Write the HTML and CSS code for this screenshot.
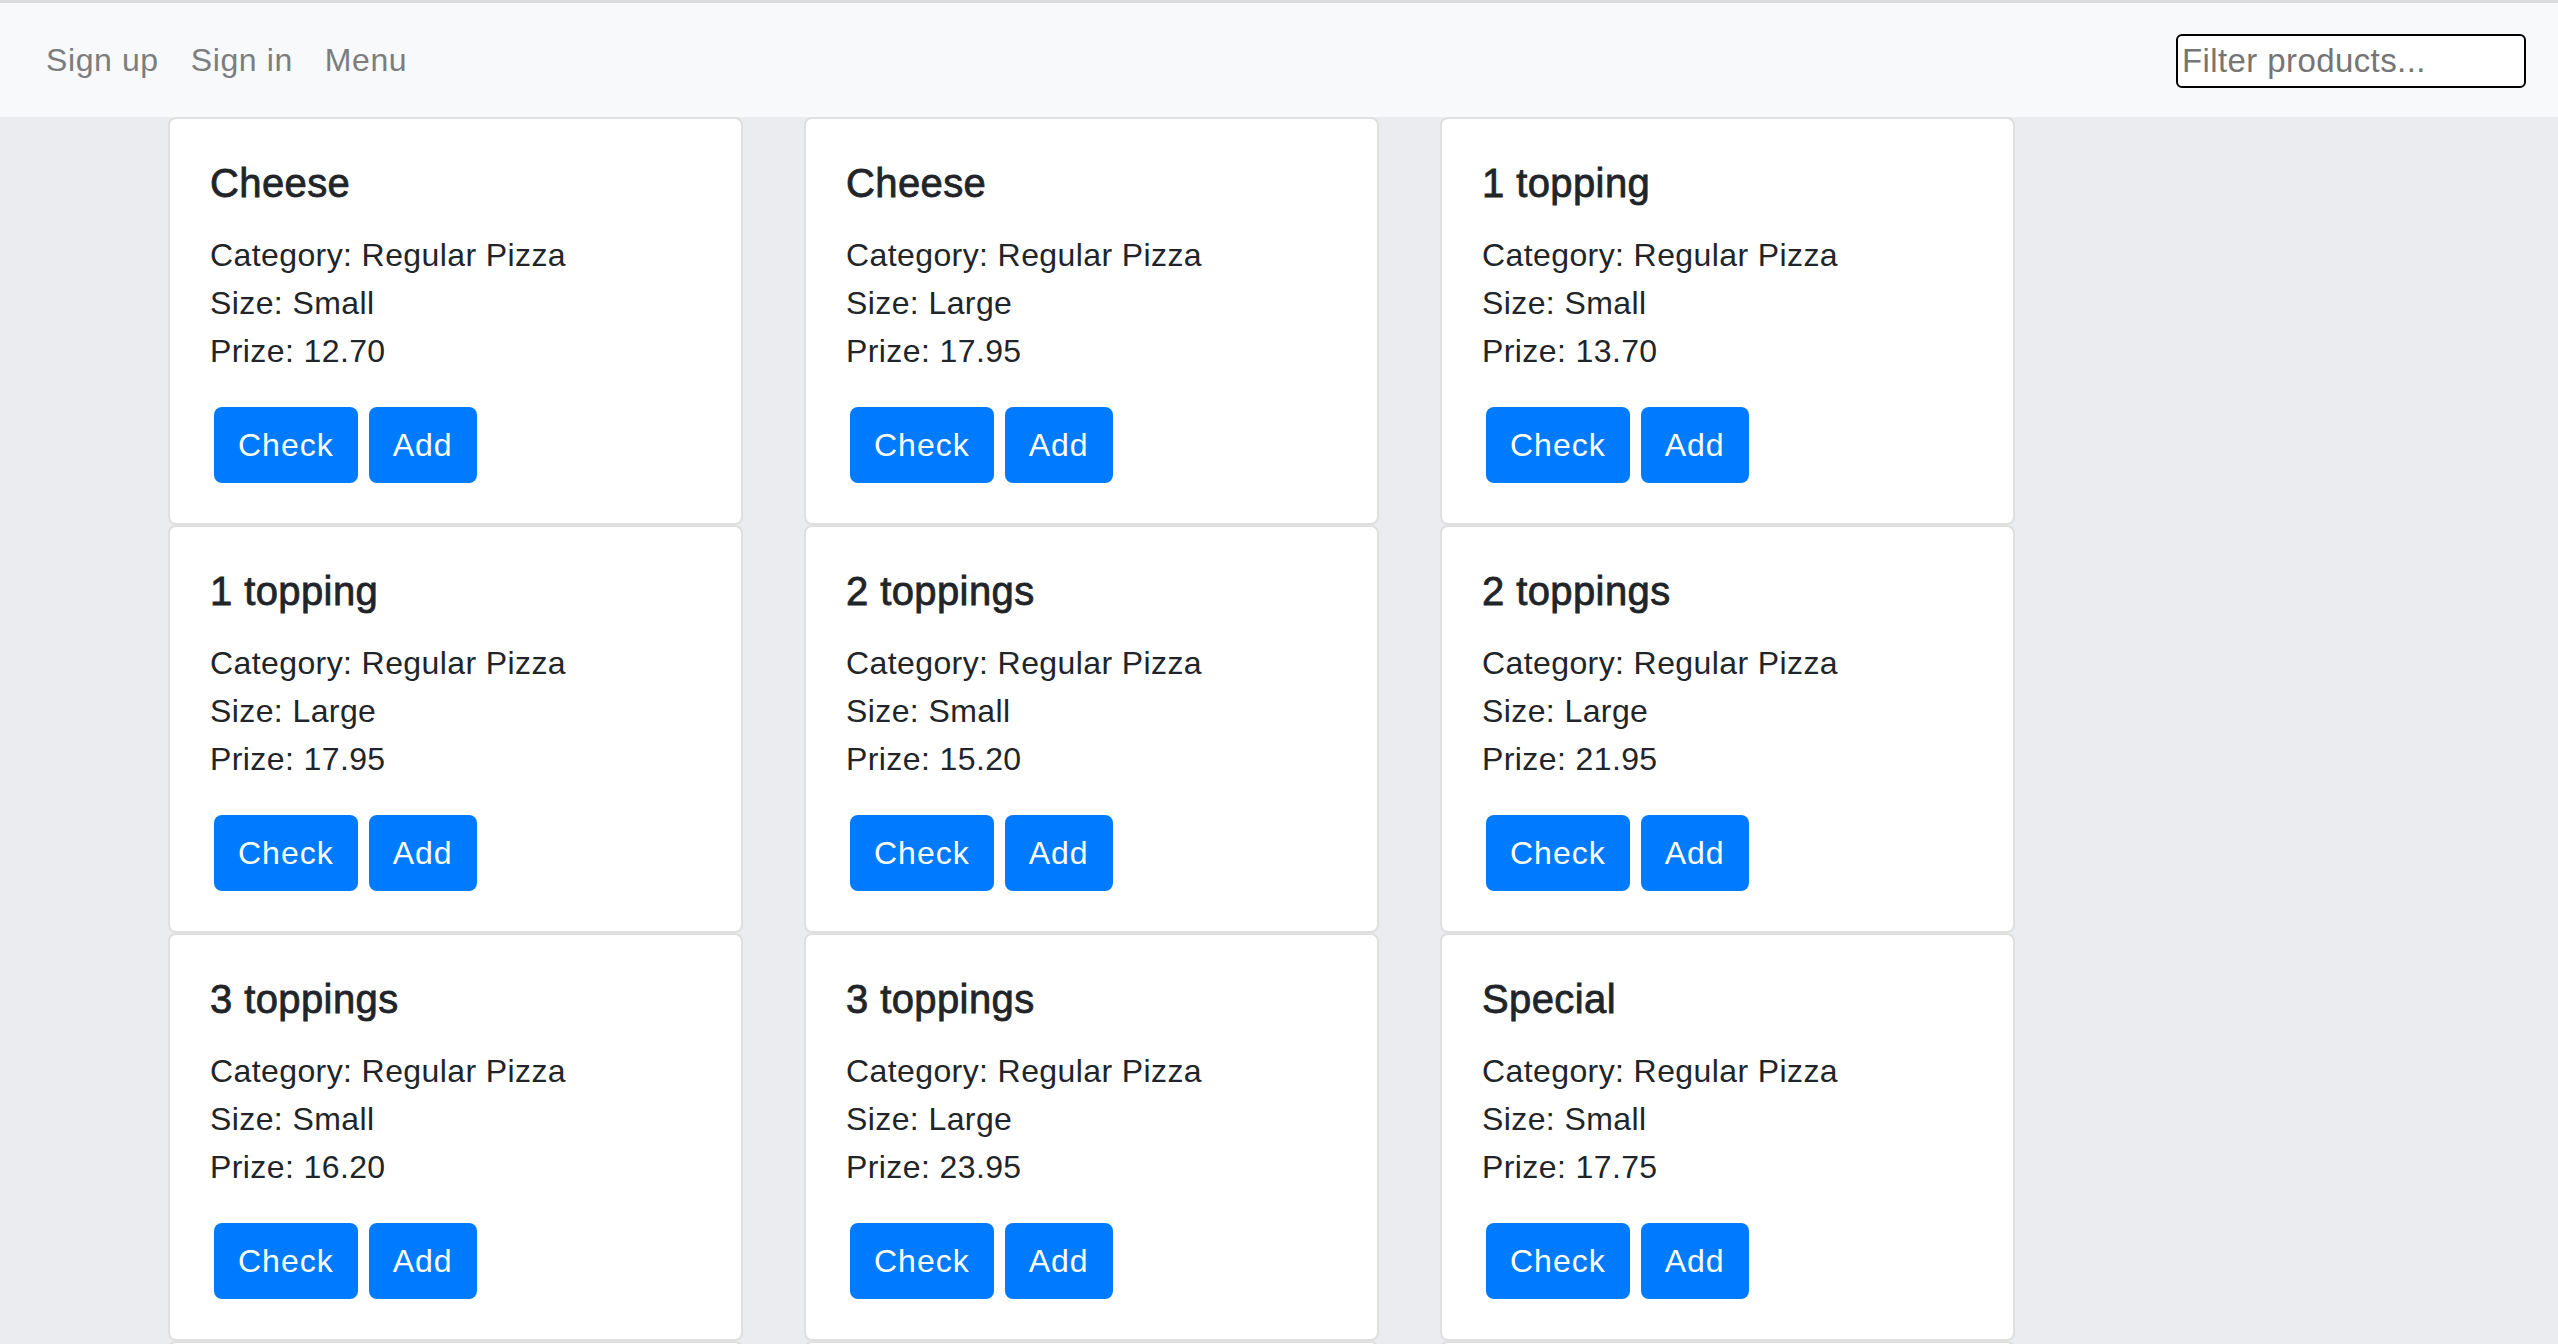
FILE: index.html
```html
<!DOCTYPE html>
<html lang="en">
<head>
<meta charset="utf-8">
<title>Products</title>
<link rel="stylesheet" href="styles.css">
</head>
<body>
<nav class="navbar">
  <ul class="nav-links">
    <li><a class="nav-link" href="#">Sign up</a></li>
    <li><a class="nav-link" href="#">Sign in</a></li>
    <li><a class="nav-link" href="#">Menu</a></li>
  </ul>
  <input class="filter" type="text" placeholder="Filter products...">
</nav>
<main class="products">
  <div class="card"><h5 class="card-title">Cheese</h5><div class="card-text"><div>Category: Regular Pizza</div><div>Size: Small</div><div>Prize: 12.70</div></div><div class="actions"><button class="btn">Check</button><button class="btn">Add</button></div></div>
  <div class="card"><h5 class="card-title">Cheese</h5><div class="card-text"><div>Category: Regular Pizza</div><div>Size: Large</div><div>Prize: 17.95</div></div><div class="actions"><button class="btn">Check</button><button class="btn">Add</button></div></div>
  <div class="card"><h5 class="card-title">1 topping</h5><div class="card-text"><div>Category: Regular Pizza</div><div>Size: Small</div><div>Prize: 13.70</div></div><div class="actions"><button class="btn">Check</button><button class="btn">Add</button></div></div>
  <div class="card"><h5 class="card-title">1 topping</h5><div class="card-text"><div>Category: Regular Pizza</div><div>Size: Large</div><div>Prize: 17.95</div></div><div class="actions"><button class="btn">Check</button><button class="btn">Add</button></div></div>
  <div class="card"><h5 class="card-title">2 toppings</h5><div class="card-text"><div>Category: Regular Pizza</div><div>Size: Small</div><div>Prize: 15.20</div></div><div class="actions"><button class="btn">Check</button><button class="btn">Add</button></div></div>
  <div class="card"><h5 class="card-title">2 toppings</h5><div class="card-text"><div>Category: Regular Pizza</div><div>Size: Large</div><div>Prize: 21.95</div></div><div class="actions"><button class="btn">Check</button><button class="btn">Add</button></div></div>
  <div class="card"><h5 class="card-title">3 toppings</h5><div class="card-text"><div>Category: Regular Pizza</div><div>Size: Small</div><div>Prize: 16.20</div></div><div class="actions"><button class="btn">Check</button><button class="btn">Add</button></div></div>
  <div class="card"><h5 class="card-title">3 toppings</h5><div class="card-text"><div>Category: Regular Pizza</div><div>Size: Large</div><div>Prize: 23.95</div></div><div class="actions"><button class="btn">Check</button><button class="btn">Add</button></div></div>
  <div class="card"><h5 class="card-title">Special</h5><div class="card-text"><div>Category: Regular Pizza</div><div>Size: Small</div><div>Prize: 17.75</div></div><div class="actions"><button class="btn">Check</button><button class="btn">Add</button></div></div>
  <div class="card"><h5 class="card-title">Special</h5><div class="card-text"><div>Category: Regular Pizza</div><div>Size: Large</div><div>Prize: 25.95</div></div><div class="actions"><button class="btn">Check</button><button class="btn">Add</button></div></div>
  <div class="card"><h5 class="card-title">Cheese</h5><div class="card-text"><div>Category: Sicilian Pizza</div><div>Size: Small</div><div>Prize: 23.45</div></div><div class="actions"><button class="btn">Check</button><button class="btn">Add</button></div></div>
  <div class="card"><h5 class="card-title">Cheese</h5><div class="card-text"><div>Category: Sicilian Pizza</div><div>Size: Large</div><div>Prize: 37.70</div></div><div class="actions"><button class="btn">Check</button><button class="btn">Add</button></div></div>
</main>
</body>
</html>
```

FILE: styles.css
```css
html, body {
  margin: 0;
  padding: 0;
}

body {
  background: #ebecef;
  color: #212529;
  font-family: "Liberation Sans", Arial, Helvetica, sans-serif;
  font-size: 32px;
  line-height: 48px;
  letter-spacing: 0.4px;
  border-top: 3px solid #dcdddf;
}

.navbar {
  display: flex;
  align-items: center;
  justify-content: space-between;
  height: 114px;
  padding: 0 32px 0 30px;
  background: #f8f9fa;
}

.nav-links {
  display: flex;
  list-style: none;
  margin: 0;
  padding: 0;
}

.nav-link {
  display: block;
  padding: 16px;
  color: #7c7d7e;
  text-decoration: none;
  letter-spacing: 0.6px;
}

.filter {
  box-sizing: border-box;
  width: 350px;
  height: 54px;
  margin-top: 2px;
  padding: 0 4px;
  border: 2px solid #000;
  border-radius: 6px;
  background: #fff;
  font-family: inherit;
  font-size: 33px;
  letter-spacing: 0.4px;
  color: #212529;
  outline: none;
}

.filter::placeholder {
  color: #757575;
}

.products {
  display: grid;
  grid-template-columns: repeat(3, 575px);
  column-gap: 61px;
  padding-left: 168px;
}

.card {
  background: #fff;
  border: 2px solid #dfdfdf;
  border-radius: 8px;
  padding: 40px;
}

.card-title {
  margin: 0 0 24px;
  font-size: 40px;
  line-height: 48px;
  font-weight: 400;
  -webkit-text-stroke: 0.8px #212529;
}

.card-text {
  margin-bottom: 32px;
}

.actions {
  display: flex;
}

.btn {
  height: 76px;
  padding: 0 24px;
  margin-left: 4px;
  border: 0;
  border-radius: 8px;
  background: #007bff;
  color: #fff;
  font-family: inherit;
  font-size: 32px;
  letter-spacing: 1px;
  cursor: pointer;
}

.btn + .btn {
  margin-left: 11px;
}
```
